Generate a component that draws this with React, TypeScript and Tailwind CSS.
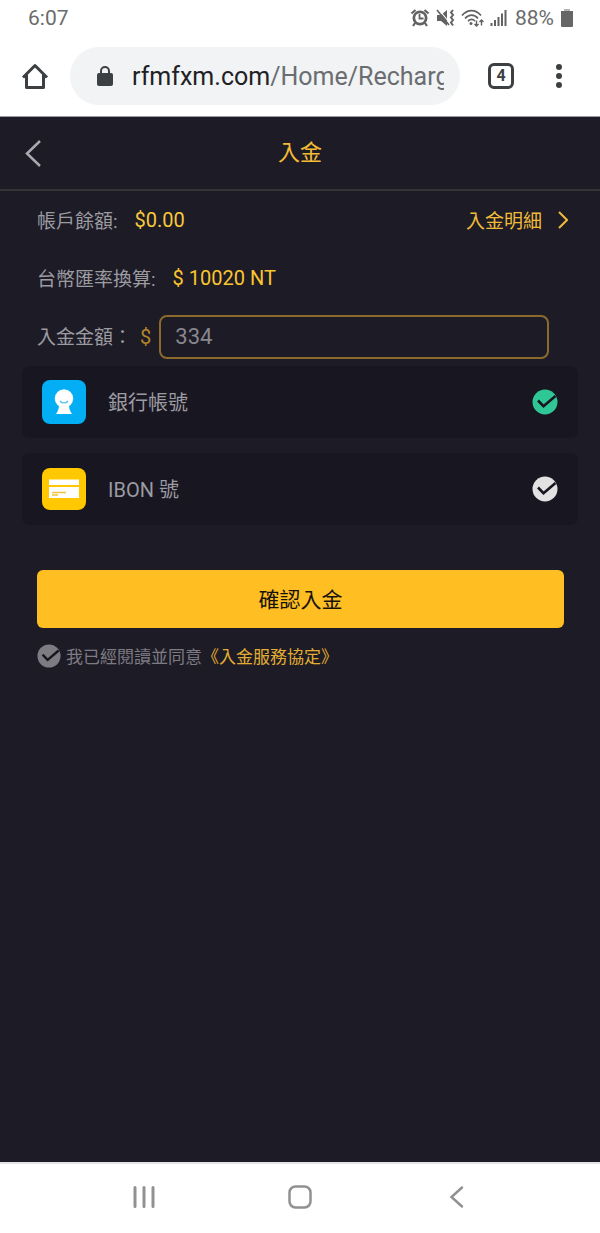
import { useState } from 'react'

const METHODS = [
  { id: 'bank', label: '銀行帳號', Icon: BankIcon },
  { id: 'ibon', label: 'IBON 號', Icon: CardIcon },
]

export default function App() {
  return (
    <div className="min-h-screen flex flex-col bg-white font-['Roboto','Noto_Sans_CJK_TC',sans-serif]">
      <StatusBar />
      <BrowserBar />
      <Deposit />
      <SystemNav />
    </div>
  )
}

function StatusBar() {
  return (
    <div className="h-9 pl-7 pr-[26px] flex items-center justify-between text-[21px] leading-9 text-[#6b6b6b]">
      <span>6:07</span>
      <div className="flex items-center gap-[6px]">
        <AlarmIcon />
        <MuteIcon />
        <WifiIcon />
        <SignalIcon />
        <span className="pl-[2px]">88%</span>
        <svg width="14" height="20" viewBox="0 0 14 20" aria-hidden>
          <path d="M4 1h6v3H4z" fill="#b5b5b5" />
          <path d="M1 3h12v15a1 1 0 0 1-1 1H2a1 1 0 0 1-1-1z" fill="#666" />
        </svg>
      </div>
    </div>
  )
}

function BrowserBar() {
  return (
    <div className="h-[81px] pl-5 pr-[33px] flex items-center border-b border-[#9a9aa2] text-[#3c4043]">
      <button type="button" aria-label="Home">
        <svg width="30" height="30" viewBox="0 0 30 30" fill="none" stroke="currentColor" strokeWidth="3" aria-hidden>
          <path d="M3 16.500 15 4.500l12 12M6.500 14v12.500h17V14" strokeLinejoin="round" />
        </svg>
      </button>
      <button
        type="button"
        className="ml-5 mr-7 h-[58px] min-w-0 flex-1 flex items-center rounded-full bg-[#f1f3f4] pl-[26px] pr-4"
      >
        <svg width="18" height="22" viewBox="0 0 18 22" className="shrink-0" aria-hidden>
          <path d="M5 9V6a4 4 0 0 1 8 0v3" fill="none" stroke="currentColor" strokeWidth="2" />
          <rect x="1" y="8" width="16" height="13" rx="2" fill="currentColor" />
        </svg>
        <span className="ml-[18px] flex-1 overflow-hidden whitespace-nowrap pt-[2px] text-left text-[25px] leading-8 text-[#202124]">
          rfmfxm.com<span className="text-[#6a6d71]">/Home/Recharge</span>
        </span>
      </button>
      <button
        type="button"
        aria-label="Tabs"
        className="size-[26px] rounded-md border-[3px] border-current text-base leading-5 font-bold"
      >
        4
      </button>
      <button type="button" aria-label="More" className="ml-[37px]">
        <svg width="16" height="26" viewBox="0 0 16 26" fill="currentColor" aria-hidden>
          <circle cx="8" cy="4" r="3" />
          <circle cx="8" cy="13" r="3" />
          <circle cx="8" cy="22" r="3" />
        </svg>
      </button>
    </div>
  )
}

function Deposit() {
  const [amount, setAmount] = useState('334')
  const [method, setMethod] = useState('bank')

  return (
    <main className="flex-1 bg-[#1d1b25] text-[19px] leading-7 text-[#9c9ba2]">
      <header className="h-[74px] px-5 grid grid-cols-[1fr_auto_1fr] items-center border-b-2 border-[#343435]">
        <button type="button" aria-label="Back" className="text-[#aaa9b0]">
          <svg width="28" height="28" viewBox="0 0 28 28" fill="none" stroke="currentColor" strokeWidth="2.5" aria-hidden>
            <path d="M20 2 7 14.500 20 27" />
          </svg>
        </button>
        <h1 className="text-[22px] text-[#f5bb34]">入金</h1>
      </header>

      <form onSubmit={(e) => e.preventDefault()}>
        <div className="pl-[37px] pr-8">
          <div className="h-[58px] flex items-center">
            <span className="pt-[3px]">帳戶餘額:</span>
            <span className="ml-[17px] text-xl text-[#f8c93b]">$0.00</span>
            <a href="#detail" className="ml-auto flex items-center gap-4 text-[#f0bb3a]">
              <span className="pt-[3px]">入金明細</span>
              <svg width="10" height="18" viewBox="0 0 10 18" fill="none" stroke="currentColor" strokeWidth="2" aria-hidden>
                <path d="m1 1 8 8-8 8" />
              </svg>
            </a>
          </div>
          <div className="h-[58px] flex items-center">
            <span className="pt-[3px]">台幣匯率換算:</span>
            <span className="ml-[17px] text-xl text-[#fcc62f]">$ 10020 NT</span>
          </div>
          <div className="h-[59px] pr-[19px] flex items-center">
            <label htmlFor="amount" className="pt-[3px]">入金金額：</label>
            <span className="ml-2 mr-2 text-xl text-[#b58428]">$</span>
            <input
              id="amount"
              inputMode="decimal"
              value={amount}
              onChange={(e) => setAmount(e.target.value)}
              className="h-11 min-w-0 flex-1 rounded-lg border-2 border-[#8b6a2c] bg-transparent px-[14px] text-[22px] text-[#88878e] outline-none"
            />
          </div>
        </div>

        <div role="radiogroup" className="px-[22px] flex flex-col gap-[15px]">
          {METHODS.map(({ id, label, Icon }) => (
            <label key={id} className="h-[72px] px-5 flex items-center rounded-lg bg-[#181620]">
              <input
                type="radio"
                name="method"
                value={id}
                checked={method === id}
                onChange={() => setMethod(id)}
                className="sr-only"
              />
              <Icon />
              <span className="ml-[22px] flex-1 pt-[2px] text-xl">{label}</span>
              <CheckMark className={method === id ? 'size-[26px] text-[#2fc796]' : 'size-[26px] text-[#e2e2e3]'} />
            </label>
          ))}
        </div>

        <div className="pl-[37px] pr-9 pt-[45px]">
          <button
            type="submit"
            className="h-[58px] w-full rounded-md bg-[#ffbe22] pt-[2px] text-[21px] text-[#17130c]"
          >
            確認入金
          </button>
          <div className="mt-[13px] flex items-center text-[17px]">
            <label className="flex items-center gap-[5px] text-[#7d7c83]">
              <input type="checkbox" defaultChecked className="sr-only" />
              <CheckMark className="size-6" />
              <span className="pt-[2px]">我已經閱讀並同意</span>
            </label>
            <a href="#terms" className="pt-[2px] text-[#e3ad33]">《入金服務協定》</a>
          </div>
        </div>
      </form>
    </main>
  )
}

function SystemNav() {
  return (
    <nav className="h-[71px] px-[66px] pb-[3px] grid grid-cols-3 items-center justify-items-center border-t-2 border-[#e4e3e8] text-[#919191]">
      <button type="button" aria-label="Recents">
        <svg width="24" height="24" viewBox="0 0 24 24" stroke="currentColor" strokeWidth="3" strokeLinecap="round" aria-hidden>
          <path d="M3 2.500v19M12 2.500v19M21 2.500v19" />
        </svg>
      </button>
      <button type="button" aria-label="Home screen">
        <svg width="26" height="26" viewBox="0 0 26 26" fill="none" stroke="currentColor" strokeWidth="2.5" aria-hidden>
          <rect x="2.500" y="2.500" width="21" height="21" rx="6" />
        </svg>
      </button>
      <button type="button" aria-label="Go back">
        <svg width="24" height="24" viewBox="0 0 24 24" fill="none" stroke="currentColor" strokeWidth="2.5" strokeLinecap="round" aria-hidden>
          <path d="M18 2.500 7.500 12l10.500 9.500" />
        </svg>
      </button>
    </nav>
  )
}

function CheckMark({ className }: { className: string }) {
  return (
    <svg viewBox="0 0 26 26" className={className} aria-hidden>
      <circle cx="13" cy="13" r="12.500" fill="currentColor" />
      <path d="m6 11.500 5.500 5.700L23.500 7" fill="none" stroke="#181620" strokeWidth="2.600" />
    </svg>
  )
}

function BankIcon() {
  return (
    <svg width="44" height="44" viewBox="0 0 44 44" aria-hidden>
      <rect width="44" height="44" rx="8" fill="#04aef5" />
      <path d="M17 25h10c0 3 .8 6 3 9H14c2.200-3 3-6 3-9z" fill="#fff" />
      <circle cx="22" cy="18.500" r="9.200" fill="#fff" />
      <path d="M18 21c2 2.600 6 2.600 8 0" fill="none" stroke="#5cc3ee" strokeWidth="1.300" />
    </svg>
  )
}

function CardIcon() {
  return (
    <svg width="44" height="44" viewBox="0 0 44 44" aria-hidden>
      <rect y="1" width="44" height="42" rx="8" fill="#ffc800" />
      <path d="M7 12.500h30v5.500H7zM7 20h30v11H7z" fill="#fff" />
      <path d="M10 25.500h14M10 28h6" stroke="#f0c33a" strokeWidth="1.300" />
    </svg>
  )
}

function AlarmIcon() {
  return (
    <svg width="20" height="20" viewBox="0 0 20 20" fill="none" stroke="#626262" aria-hidden>
      <circle cx="10" cy="10" r="7.500" fill="#626262" stroke="none" />
      <circle cx="10" cy="10" r="4.800" fill="#fff" stroke="none" />
      <path d="M9.500 6v4.500h4" strokeWidth="1.800" />
      <path d="M1.500 5.500 5.500 2M18.500 5.500 14.500 2M5 15l-2 3M15 15l2 3" strokeWidth="2.200" />
    </svg>
  )
}

function MuteIcon() {
  return (
    <svg width="19" height="20" viewBox="0 0 19 20" fill="none" stroke="#626262" aria-hidden>
      <path d="M1 7h4l6-5v16l-6-5H1z" fill="#626262" stroke="none" />
      <path d="m2.500 1 12 15" stroke="#fff" strokeWidth="1.200" />
      <path d="m1 2 12 15" strokeWidth="1.600" />
      <path d="m17 2-2 2.500 2 2.500-2 2.500 2 2.500-2 2.500 2 3" strokeWidth="2" />
    </svg>
  )
}

function WifiIcon() {
  return (
    <svg width="23" height="20" viewBox="0 0 23 20" fill="none" stroke="#626262" strokeWidth="1.700" aria-hidden>
      <path d="M1 7.500c5.500-6.500 13.500-6.500 19 0M4 10.500c4-4.500 9.500-4.500 13 0M7 13c2.500-2.300 4.800-2.300 7 0" />
      <circle cx="10" cy="15.500" r="1.500" fill="#626262" stroke="none" />
      <path d="M15.500 12.500v5.500M13.500 16l2 2 2-2M20.500 17.500V12M18.500 14l2-2 2 2" strokeWidth="1.400" />
    </svg>
  )
}

function SignalIcon() {
  return (
    <svg width="17" height="20" viewBox="0 0 17 20" stroke="#626262" strokeWidth="2" aria-hidden>
      <path d="M1.500 15v3M5 12v6M8.500 9v9M12 5.500V18M15.500 2v16" />
    </svg>
  )
}
